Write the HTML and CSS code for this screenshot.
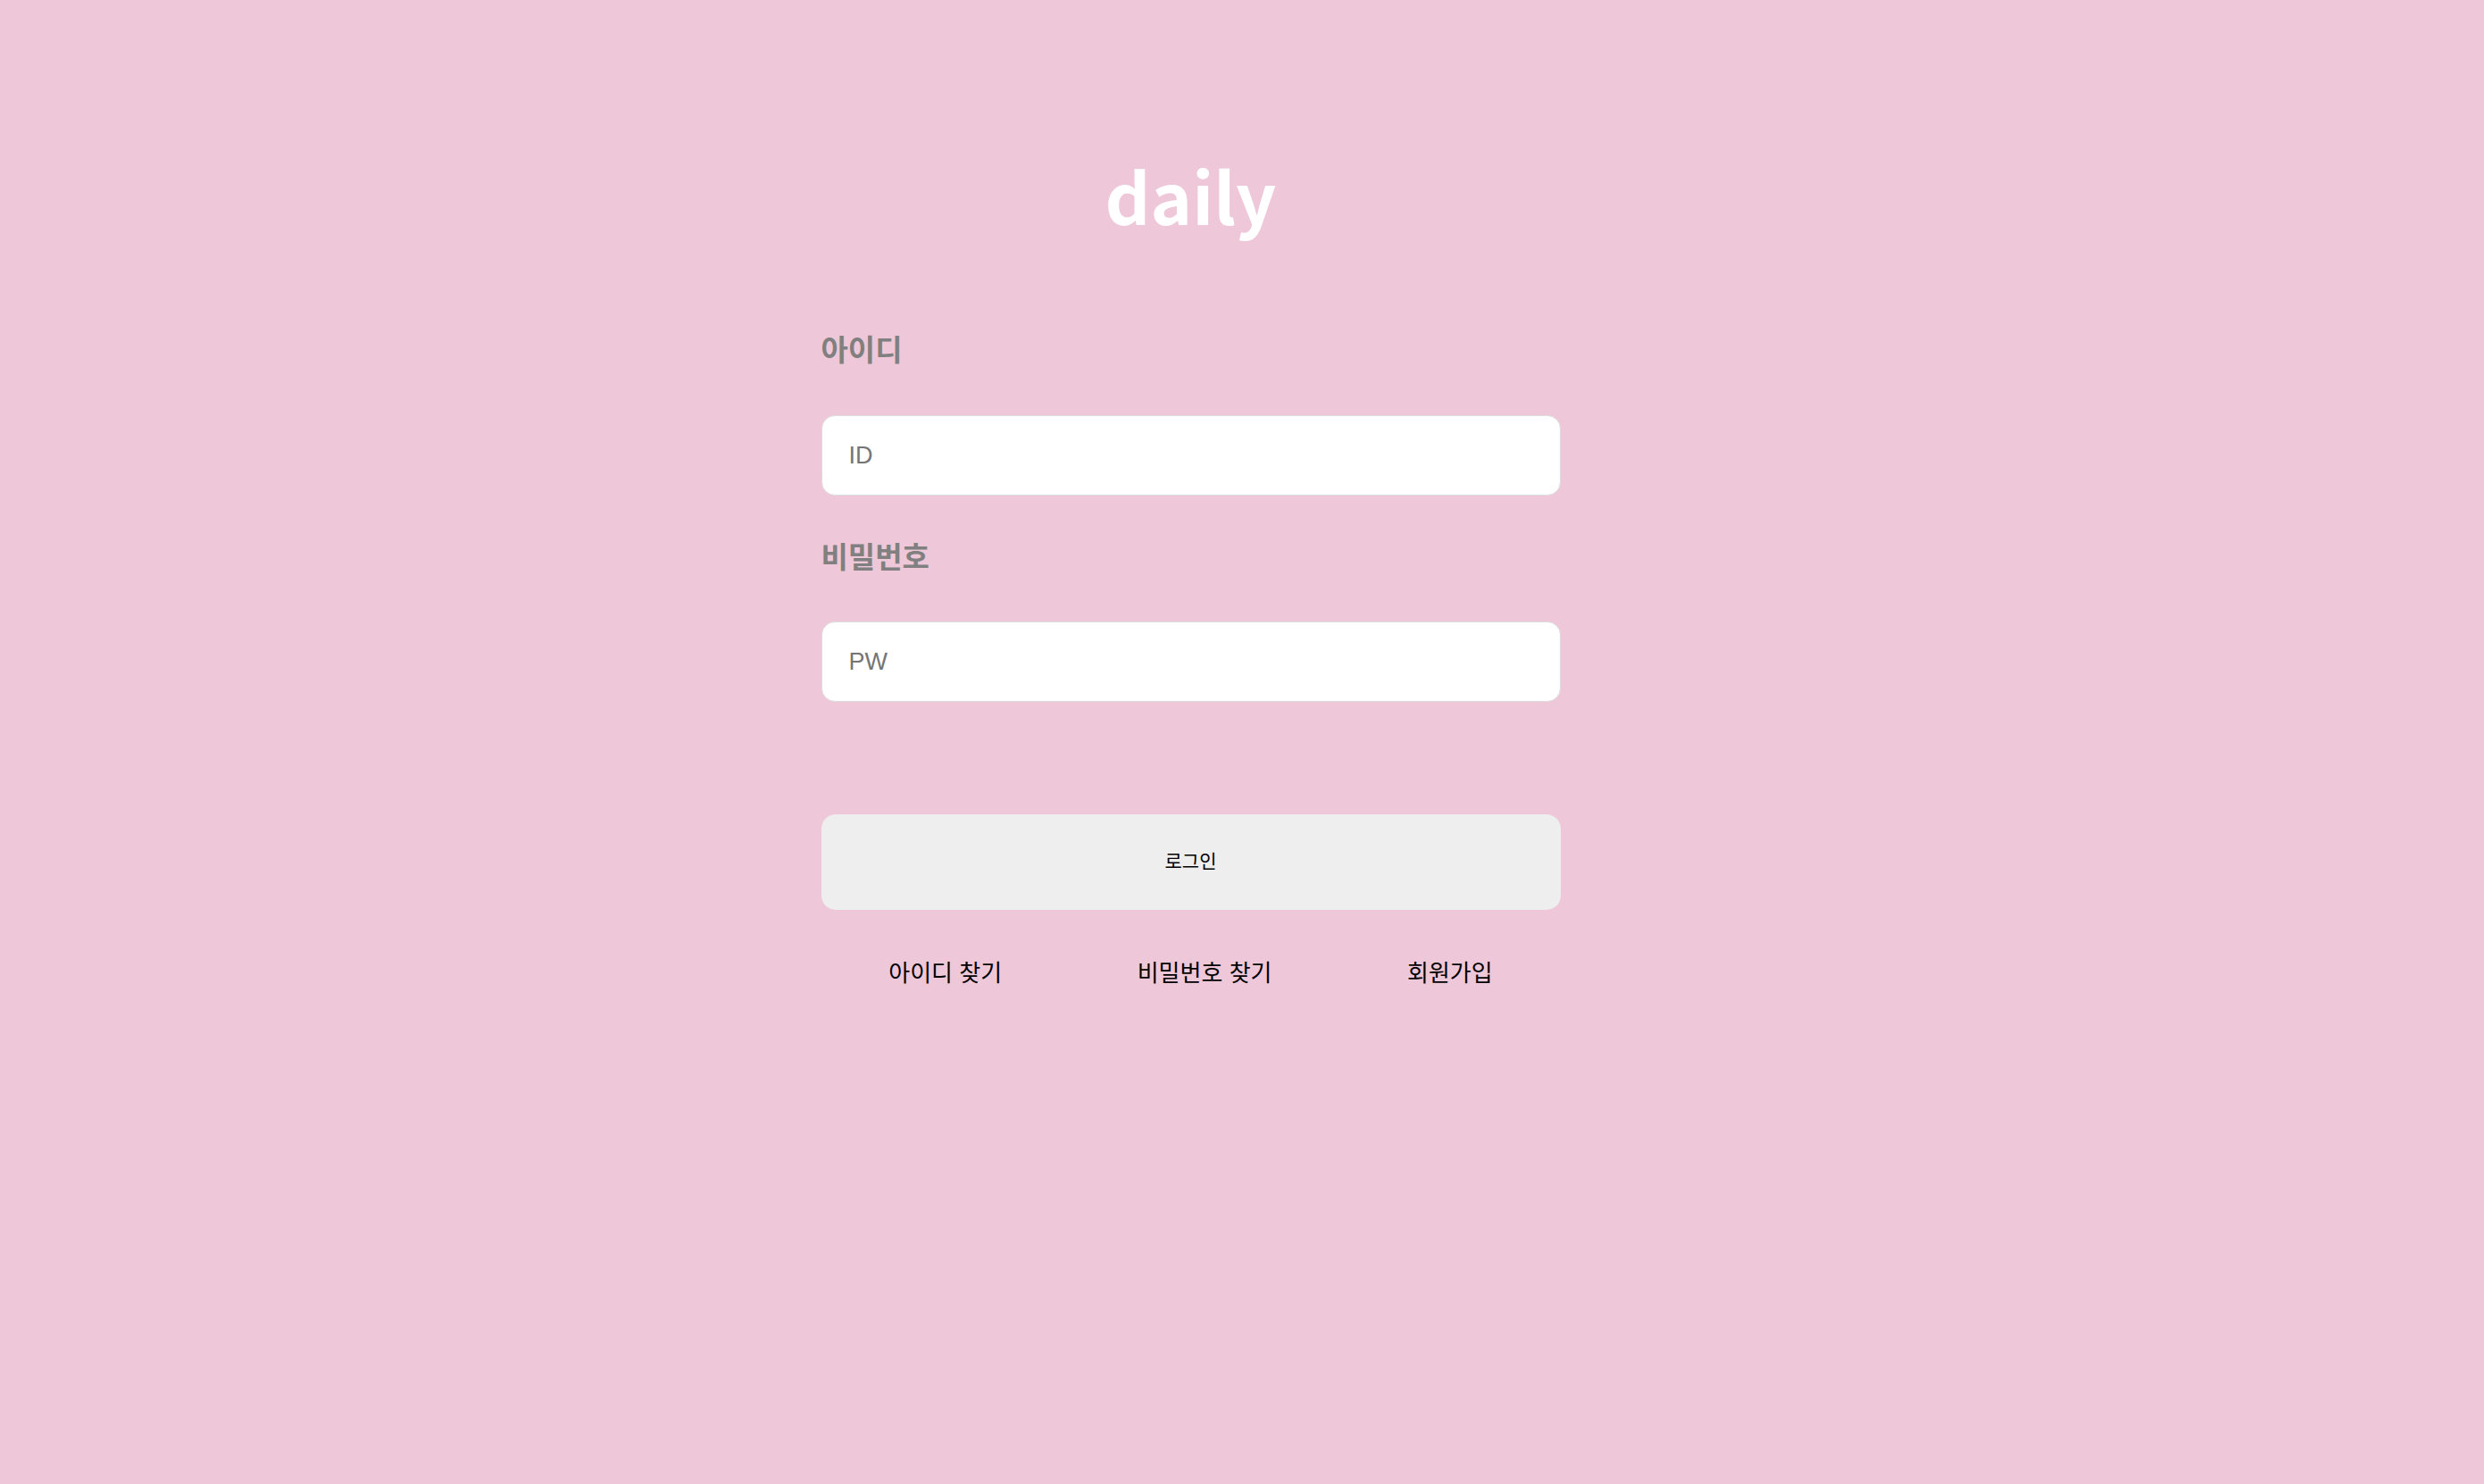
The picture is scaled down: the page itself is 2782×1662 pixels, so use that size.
FILE: index.html
```html
<!DOCTYPE html>
<html lang="ko">
<head>
<meta charset="utf-8">
<title>daily</title>
<link rel="stylesheet" href="styles.css">
</head>
<body>
<main class="page">
  <h1 class="logo">daily</h1>
  <form class="login-form">
    <label class="field-label" for="uid">아이디</label>
    <input class="field-input" id="uid" type="text" placeholder="ID">
    <label class="field-label field-label--second" for="upw">비밀번호</label>
    <input class="field-input" id="upw" type="password" placeholder="PW">
    <button class="login-button" type="button">로그인</button>
    <nav class="login-links">
      <a class="login-link" href="#">아이디 찾기</a>
      <a class="login-link" href="#">비밀번호 찾기</a>
      <a class="login-link" href="#">회원가입</a>
    </nav>
  </form>
</main>
</body>
</html>
```
FILE: styles.css
```css
html, body {
  margin: 0;
  padding: 0;
  height: 100%;
}

body {
  background: #eec7d8;
  font-family: "Noto Sans CJK KR", "Noto Sans", sans-serif;
}

.page {
  min-height: 100%;
  box-sizing: border-box;
  padding: 178px 115px 0 0;
  display: flex;
  flex-direction: column;
  align-items: center;
}

.logo {
  margin: 0;
  font-size: 79px;
  line-height: 79px;
  font-weight: 700;
  color: #ffffff;
}

.login-form {
  width: 828px;
  margin-top: 113px;
  display: flex;
  flex-direction: column;
}

.field-label {
  display: block;
  font-size: 33px;
  line-height: 40px;
  font-weight: 700;
  color: #808080;
  margin-bottom: 55px;
}

.field-label--second {
  margin-top: 47px;
  margin-bottom: 54px;
}

.field-input {
  box-sizing: border-box;
  width: 100%;
  height: 90px;
  margin: 0;
  padding: 0 0 0 30px;
  border: 1px solid #dddddd;
  border-radius: 15px;
  background: #ffffff;
  font-family: "Liberation Sans", Arial, sans-serif;
  font-size: 27px;
  color: #333333;
  outline: none;
}

.field-input::placeholder {
  color: #757575;
}

.login-button {
  margin-top: 126px;
  height: 107px;
  width: 100%;
  padding: 0 0 6px;
  border: none;
  border-radius: 16px;
  background: #eeeeee;
  font-family: "Noto Sans CJK KR", sans-serif;
  font-size: 21px;
  color: #000000;
  cursor: pointer;
}

.login-links {
  margin-top: 51px;
  display: flex;
  justify-content: space-around;
}

.login-link {
  font-size: 26px;
  line-height: 36px;
  color: #000000;
  text-decoration: none;
}
```
